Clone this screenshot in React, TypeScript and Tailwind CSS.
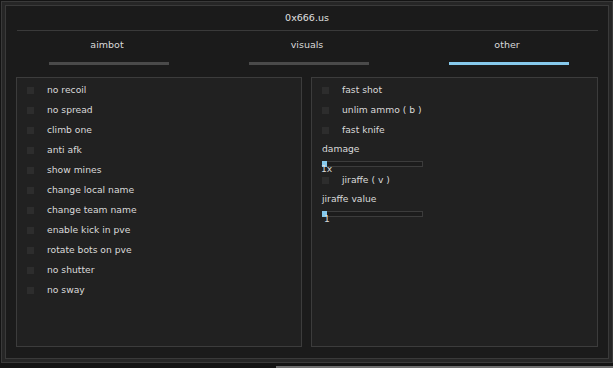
const leftItems = [
  'no recoil',
  'no spread',
  'climb one',
  'anti afk',
  'show mines',
  'change local name',
  'change team name',
  'enable kick in pve',
  'rotate bots on pve',
  'no shutter',
  'no sway',
];

const tabs = [
  { name: 'aimbot', active: false },
  { name: 'visuals', active: false },
  { name: 'other', active: true },
];

function Check({ label }: { label: string }) {
  return (
    <div className="flex items-center h-[20px]">
      <div className="w-[7px] h-[7px] bg-[#2d2d2d]" />
      <span className="ml-[13px] leading-[12px] text-[#dadada]">{label}</span>
    </div>
  );
}

function Slider({ value, offset }: { value: string; offset: string }) {
  return (
    <div className="relative w-[101px] h-[6px] border border-[#3c3c3c] bg-[#1c1c1c]">
      <div className="absolute -left-px -top-px w-[5px] h-[6px] bg-[#86c9ec]" />
      <span className={`absolute top-[1px] leading-[12px] text-[#dadada] ${offset}`}>{value}</span>
    </div>
  );
}

export default function App() {
  return (
    <div
      className="w-[613px] h-[368px] overflow-hidden bg-[#141414] text-[9.2px]"
      style={{ fontFamily: '"DejaVu Sans", Verdana, sans-serif' }}
    >
      <div className="ml-px mt-px w-[612px] h-[362px] border border-[#3a3a3a] bg-[#262626] p-[3px]">
        <div className="w-full h-full border border-[#3a3a3a] bg-[#1b1b1b] flex flex-col">
          {/* title */}
          <div className="h-[24px] flex items-center justify-center text-[9.5px] text-[#e0e0e0]">
            0x666.us
          </div>
          <div className="ml-[11px] w-[581px] h-px bg-[#3a3a3a]" />

          {/* tabs */}
          <div className="ml-[1px] flex pt-[8px]">
            {tabs.map((t) => (
              <div key={t.name} className="w-[200px] flex flex-col items-center">
                <span className="leading-[12px] text-[9.5px] text-[#dadada]">{t.name}</span>
                <div
                  className={`mt-[11px] ml-[4px] w-[120px] h-[3px] ${t.active ? 'bg-[#86c9ec]' : 'bg-[#4a4a4a]'}`}
                />
              </div>
            ))}
          </div>

          {/* panels */}
          <div className="ml-[10px] mt-[12px] flex gap-[9px]">
            <div className="w-[286px] h-[270px] border border-[#3c3c3c] bg-[#212121] pl-[10px] pt-[2px]">
              {leftItems.map((l) => (
                <Check key={l} label={l} />
              ))}
            </div>
            <div className="w-[287px] h-[270px] border border-[#3c3c3c] bg-[#212121] pl-[10px] pt-[2px]">
              <Check label="fast shot" />
              <Check label="unlim ammo ( b )" />
              <Check label="fast knife" />
              <div className="mt-[3px] leading-[12px] text-[#dadada]">damage</div>
              <div className="mt-[6px]">
                <Slider value="1x" offset="-left-[2px]" />
              </div>
              <div className="mt-[3px]">
                <Check label="jiraffe ( v )" />
              </div>
              <div className="mt-[3px] leading-[12px] text-[#dadada]">jiraffe value</div>
              <div className="mt-[6px]">
                <Slider value="1" offset="left-[1px]" />
              </div>
            </div>
          </div>
        </div>
      </div>
      <div className="mt-[3px] ml-[276px] h-[2px] bg-[#707070]" />
    </div>
  );
}
